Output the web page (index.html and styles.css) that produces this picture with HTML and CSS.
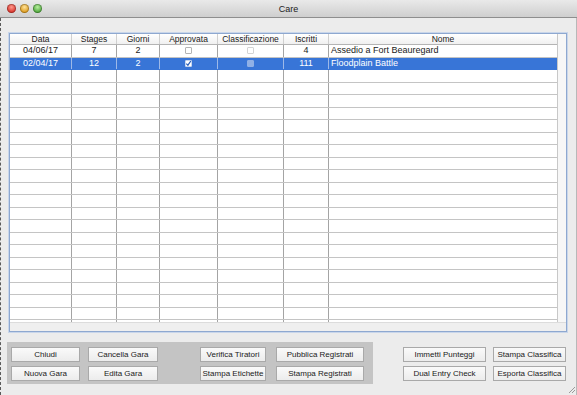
FILE: index.html
```html
<!DOCTYPE html>
<html lang="it">
<head>
  <meta charset="UTF-8" />
  <title>Care</title>
  <link rel="stylesheet" href="styles.css">
</head>
<body>
  <div class="window">
    <div class="titlebar">
      <div class="lights">
        <span class="light red"></span>
        <span class="light yellow"></span>
        <span class="light green"></span>
      </div>
      <div class="title">Care</div>
    </div>

    <div class="body">
      <!-- Gare table -->
      <div class="frame">
        <div class="frame-inner">
          <div class="table" id="table">
            <div class="row head">
              <div class="cell">Data</div>
              <div class="cell">Stages</div>
              <div class="cell">Giorni</div>
              <div class="cell">Approvata</div>
              <div class="cell">Classificazione</div>
              <div class="cell">Iscritti</div>
              <div class="cell">Nome</div>
            </div>
            <div class="row">
              <div class="cell">04/06/17</div>
              <div class="cell">7</div>
              <div class="cell">2</div>
              <div class="cell"><span class="check"></span></div>
              <div class="cell"><span class="check off"></span></div>
              <div class="cell">4</div>
              <div class="cell name">Assedio a Fort Beauregard</div>
            </div>
            <div class="row selected">
              <div class="cell">02/04/17</div>
              <div class="cell">12</div>
              <div class="cell">2</div>
              <div class="cell"><span class="check on"><svg viewBox="0 0 7 7" width="7" height="7"><path d="M1.3 3.6 L2.9 5.2 L5.8 1" fill="none" stroke="#2a5fb8" stroke-width="1.2"/></svg></span></div>
              <div class="cell"><span class="check dis"></span></div>
              <div class="cell">111</div>
              <div class="cell name">Floodplain Battle</div>
            </div>
          </div>
          <div class="vscroll"></div>
        </div>
        <div class="hstrip"></div>
      </div>

      <!-- Buttons -->
      <div class="toolbar">
        <div class="panel">
          <div class="group first">
            <button class="btn">Chiudi</button>
            <button class="btn">Cancella Gara</button>
            <button class="btn">Nuova Gara</button>
            <button class="btn">Edita Gara</button>
          </div>
          <div class="group second">
            <button class="btn">Verifica Tiratori</button>
            <button class="btn">Pubblica Registrati</button>
            <button class="btn">Stampa Etichette</button>
            <button class="btn">Stampa Registrati</button>
          </div>
        </div>
        <div class="group right">
          <button class="btn">Immetti Punteggi</button>
          <button class="btn">Stampa Classifica</button>
          <button class="btn">Dual Entry Check</button>
          <button class="btn">Esporta Classifica</button>
        </div>
      </div>
    </div>
    <svg class="grip" viewBox="0 0 9 9" width="9" height="9">
      <path d="M8 2 L2 8 M8 5 L5 8" stroke="#9a9a9a" stroke-width="1"/>
    </svg>
  </div>

  <script>
    // empty rows to fill the list
    const table = document.getElementById('table');
    for (let i = 0; i < 21; i++) {
      const row = document.createElement('div');
      row.className = 'row';
      for (let c = 0; c < 7; c++) {
        const cell = document.createElement('div');
        cell.className = 'cell';
        row.appendChild(cell);
      }
      table.appendChild(row);
    }
  </script>
</body>
</html>
```

FILE: styles.css
```css
body { margin: 0; font-family: 'Liberation Sans', Arial, sans-serif; font-size: 9px; color: #1a1a1a; }

.window { width: 577px; height: 395px; background: #ececec; position: relative; overflow: hidden; }

.titlebar {
  height: 18px;
  box-sizing: border-box;
  background: linear-gradient(#e9e9e9, #cfcfcf);
  border-bottom: 1px solid #8e8e8e;
  display: grid;
  grid-template-columns: 1fr auto 1fr;
  align-items: center;
}

.lights { display: flex; gap: 4px; padding-left: 7px; }
.light { width: 9px; height: 9px; border-radius: 50%; box-shadow: inset 0 0 0 1px rgba(0,0,0,0.25); }
.light.red { background: radial-gradient(circle at 50% 35%, #ff9a8c, #d8322a 70%); }
.light.yellow { background: radial-gradient(circle at 50% 35%, #ffe39a, #dc9a1c 70%); }
.light.green { background: radial-gradient(circle at 50% 35%, #b9f0a0, #4da53a 70%); }
.title { font-size: 9px; color: #222; }

.body {
  height: 377px;
  box-sizing: border-box;
  border-left: 1px dashed #5a5a5a;
  border-right: 1px solid #b8b8b8;
  padding-top: 15px;
}

.frame {
  margin-left: 8px;
  width: 558px;
  height: 299px;
  box-sizing: border-box;
  border: 1px solid #8ea8d0;
  box-shadow: 0 0 0 1px #c9d6ea;
  background: #f2f2f2;
  display: flex;
  flex-direction: column;
}

.frame-inner { flex: 1; display: flex; overflow: hidden; }

.table { flex: 1; background: #fff; overflow: hidden; }

.row {
  display: grid;
  grid-template-columns: 62px 45px 43px 58px 66px 45px 1fr;
  height: 12.5px;
  box-sizing: border-box;
  border-bottom: 1px solid #c4c4c4;
}

.cell {
  border-right: 1px solid #a4a4a4;
  display: flex;
  align-items: center;
  justify-content: center;
  white-space: nowrap;
  overflow: hidden;
  line-height: 1;
}
.cell:last-child { border-right: none; }
.cell.name { justify-content: flex-start; padding-left: 2px; }

.row.head {
  height: 11px;
  font-size: 8.5px;
  background: linear-gradient(#ffffff, #f0f0f0);
  border-bottom: 1px solid #b4b4b4;
}
.row.head .cell { border-right-color: #d0d0d0; }

.row.selected { background: #3875d7; color: #fff; border-bottom-color: #3875d7; }
.row.selected .cell { border-right-color: #9db9e8; }

.check {
  width: 7px;
  height: 7px;
  box-sizing: border-box;
  border: 1px solid #b4b4b4;
  border-radius: 1px;
  background: #fff;
  display: block;
}
.check.off { border-color: #d4d4d4; }
.check.on { border-color: #c6d6f0; position: relative; }
.check.on svg { position: absolute; left: -1px; top: -1px; }
.check.dis { background: #8fb0e6; border-color: #8fb0e6; }

.vscroll { width: 8px; background: #f7f7f7; border-left: 1px solid #c8c8c8; }
.hstrip { height: 8px; background: #efefef; border-top: 1px solid #dcdcdc; }

.toolbar { display: flex; margin-top: 10px; padding-left: 6px; }

.panel {
  display: flex;
  width: 366px;
  box-sizing: border-box;
  background: #c4c4c4;
  padding: 5px 9px 3px 4px;
}

.group { display: grid; row-gap: 4px; }
.group.first { grid-template-columns: 69px 70px; column-gap: 8px; }
.group.second { grid-template-columns: 66px 88px; column-gap: 10px; margin-left: 42px; }
.group.right { grid-template-columns: 83px 73px; column-gap: 7px; margin-left: auto; margin-right: 10px; padding-top: 5px; align-content: start; }

.btn {
  height: 15px;
  margin: 0;
  padding: 0;
  font-family: 'Liberation Sans', Arial, sans-serif;
  font-size: 8px;
  color: #1a1a1a;
  background: linear-gradient(#fafafa, #ececec);
  border: 1px solid #a9a9a9;
  border-radius: 0;
  white-space: nowrap;
  overflow: hidden;
}

.grip { position: absolute; right: 1px; bottom: 1px; }
```
